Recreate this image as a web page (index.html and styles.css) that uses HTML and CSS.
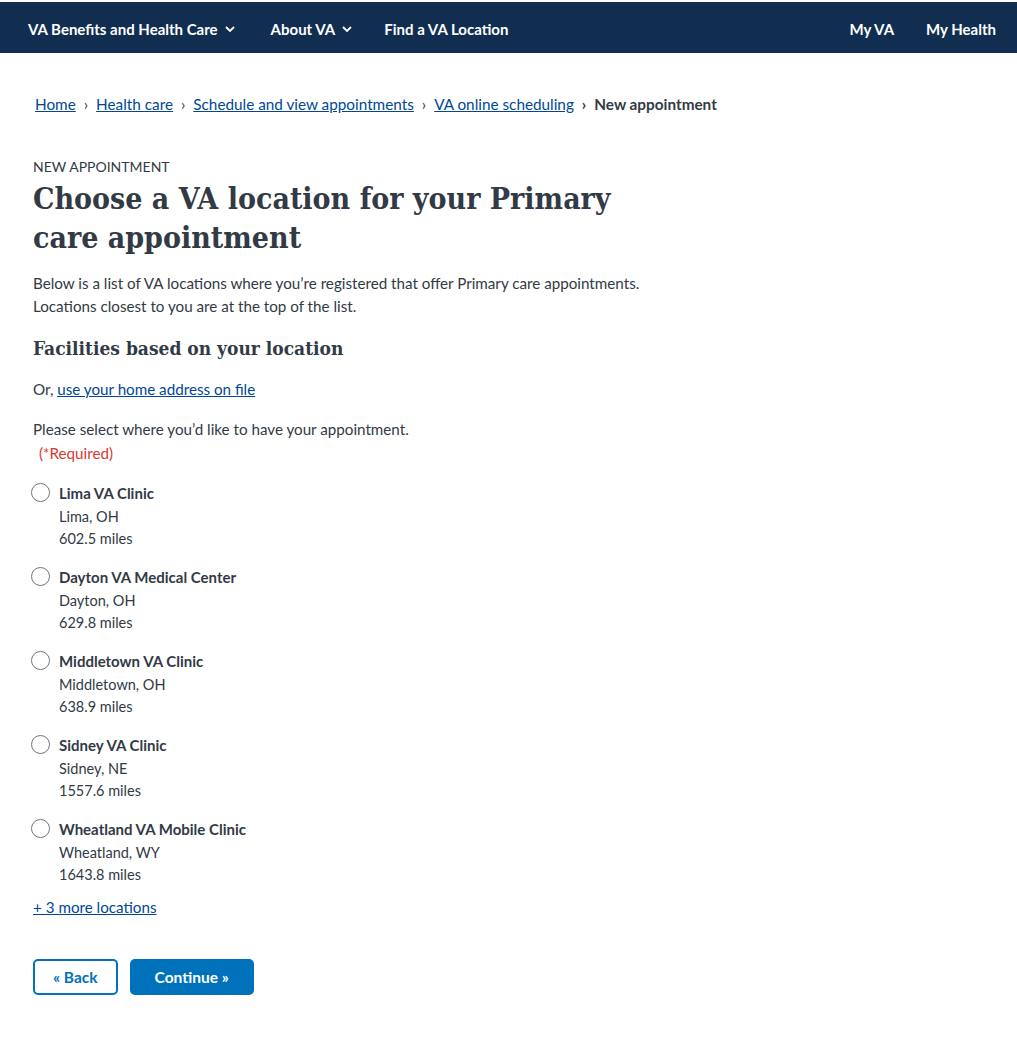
FILE: index.html
```html
<!DOCTYPE html>
<html lang="en">
<head>
<meta charset="utf-8">
<title>Choose a VA location</title>
<link rel="stylesheet" href="styles.css">
</head>
<body>
<header class="topnav">
  <nav class="nav-left">
    <span class="nav-item">VA Benefits and Health Care <svg class="chev" viewBox="0 0 10 6" width="10" height="6"><path d="M1 1l4 4 4-4" fill="none" stroke="#fff" stroke-width="1.8"/></svg></span>
    <span class="nav-item">About VA <svg class="chev" viewBox="0 0 10 6" width="10" height="6"><path d="M1 1l4 4 4-4" fill="none" stroke="#fff" stroke-width="1.8"/></svg></span>
    <span class="nav-item">Find a VA Location</span>
  </nav>
  <nav class="nav-right">
    <span class="nav-item">My VA</span>
    <span class="nav-item">My Health</span>
  </nav>
</header>
<main class="content">
  <ol class="breadcrumbs">
    <li><a href="#">Home</a></li>
    <li><a href="#">Health care</a></li>
    <li><a href="#">Schedule and view appointments</a></li>
    <li><a href="#">VA online scheduling</a></li>
    <li class="current">New appointment</li>
  </ol>
  <div class="eyebrow">NEW APPOINTMENT</div>
  <h1 class="title">Choose a VA location for your Primary care appointment</h1>
  <p class="intro">Below is a list of VA locations where you’re registered that offer Primary care appointments. Locations closest to you are at the top of the list.</p>
  <h2 class="subtitle">Facilities based on your location</h2>
  <p class="alt">Or, <a href="#">use your home address on file</a></p>
  <fieldset class="choices">
    <legend class="legend">Please select where you’d like to have your appointment.<span class="required">(*Required)</span></legend>
    <label class="choice"><input type="radio" name="loc"><span class="radio"></span><span class="info"><b>Lima VA Clinic</b><span>Lima, OH</span><span>602.5 miles</span></span></label>
    <label class="choice"><input type="radio" name="loc"><span class="radio"></span><span class="info"><b>Dayton VA Medical Center</b><span>Dayton, OH</span><span>629.8 miles</span></span></label>
    <label class="choice"><input type="radio" name="loc"><span class="radio"></span><span class="info"><b>Middletown VA Clinic</b><span>Middletown, OH</span><span>638.9 miles</span></span></label>
    <label class="choice"><input type="radio" name="loc"><span class="radio"></span><span class="info"><b>Sidney VA Clinic</b><span>Sidney, NE</span><span>1557.6 miles</span></span></label>
    <label class="choice"><input type="radio" name="loc"><span class="radio"></span><span class="info"><b>Wheatland VA Mobile Clinic</b><span>Wheatland, WY</span><span>1643.8 miles</span></span></label>
  </fieldset>
  <a href="#" class="more">+ 3 more locations</a>
  <div class="actions">
    <button class="btn btn-outline">« Back</button>
    <button class="btn btn-primary">Continue »</button>
  </div>
</main>
</body>
</html>
```
FILE: styles.css
```css
* { box-sizing: border-box; }
body {
  margin: 0;
  font-family: "Lato", "Liberation Sans", sans-serif;
  color: #323a45;
  background: #fff;
  font-size: 15px;
}
.topnav {
  height: 53px;
  background: #112e51;
  border-top: 2px solid #fff;
  display: flex;
  justify-content: space-between;
  align-items: center;
  padding: 2px 21px 0 28px;
}
.nav-left, .nav-right { display: flex; align-items: center; }
.nav-left { gap: 34px; }
.nav-right { gap: 32px; }
.nav-item {
  color: #fff;
  font-weight: 700;
  font-size: 15px;
  display: inline-flex;
  align-items: center;
  gap: 7px;
}
.nav-item + .nav-item { margin-left: 2px; }
.nav-item:last-child { margin-left: -2px; }
.nav-right .nav-item { margin-left: 0; }
.chev { margin-top: 1px; }
.content { padding: 0 33px; }
.breadcrumbs {
  list-style: none;
  margin: 0;
  padding: 40px 0 0 2px;
  display: flex;
  font-size: 15.3px;
  line-height: 22px;
}
.breadcrumbs li + li::before {
  content: "›";
  margin: 0 8px;
  color: #323a45;
}
.breadcrumbs a { color: #004795; }
.breadcrumbs .current { font-weight: 700; }
.eyebrow {
  margin-top: 42px;
  font-size: 14px;
  line-height: 20px;
}
.title {
  font-family: "DejaVu Serif Condensed", "DejaVu Serif", serif;
  font-weight: 700;
  font-size: 30px;
  line-height: 39px;
  margin: 2px 0 0;
  max-width: 620px;
  color: #323a45;
}
.intro {
  margin: 15px 0 0;
  font-size: 15.2px;
  line-height: 23px;
  max-width: 620px;
}
.subtitle {
  font-family: "DejaVu Serif Condensed", "DejaVu Serif", serif;
  font-size: 19px;
  line-height: 28px;
  margin: 16px 0 0;
}
.alt { margin: 15px 0 0; font-size: 15.2px; line-height: 24px; }
.alt a, .more { color: #004795; }
.choices { border: 0; margin: 16px 0 0; padding: 0; }
.legend {
  padding: 0;
  font-size: 15.2px;
  line-height: 24px;
}
.required { display: block; color: #d83933; margin-left: 6px; }
.choice {
  display: flex;
  gap: 9px;
  margin-top: 17px;
  position: relative;
}
.choice + .choice { margin-top: 16px; }
.choice input { position: absolute; opacity: 0; }
.radio {
  width: 19px;
  height: 19px;
  border: 1.5px solid #71767a;
  border-radius: 50%;
  margin-top: 1px;
  margin-left: -2px;
  flex: none;
  background: #fff;
}
.info { display: flex; flex-direction: column; font-size: 14.5px; line-height: 22px; }
.info b { font-size: 15px; margin-bottom: 2px; }
.more {
  display: inline-block;
  margin-top: 9px;
  font-size: 15.2px;
  line-height: 24px;
}
.actions { display: flex; gap: 12px; margin-top: 40px; }
.btn {
  font-family: inherit;
  font-weight: 700;
  font-size: 15.5px;
  height: 36px;
  border-radius: 5px;
  padding: 0 18px;
  cursor: pointer;
}
.btn-outline { background: #fff; color: #0071bb; border: 2px solid #0071bb; }
.btn-primary { background: #0071bb; color: #fff; border: 0; padding: 0 25px; }
```
